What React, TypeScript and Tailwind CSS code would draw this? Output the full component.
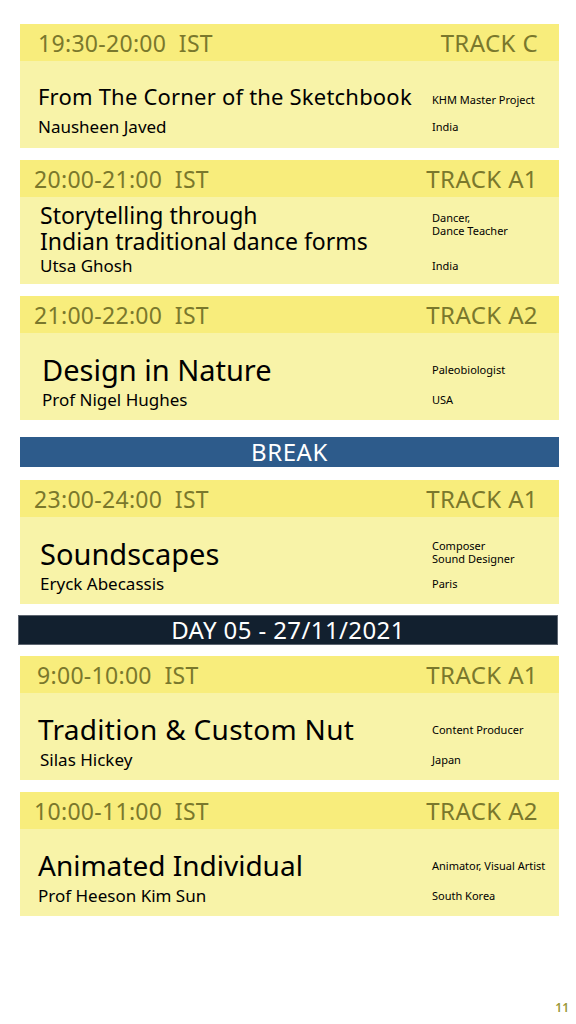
import React from "react";

type Card = {
  time: string;
  track: string;
  titleLines: string[];
  name: string;
  role: string[];
  loc: string;
  mt: string;
  hpl: string;
  titleCls: string;
  namePl: string;
  bodyCls: string;
  roleCls: string;
};

const head = "'Noto Sans', 'Open Sans', sans-serif";
const body = "'Noto Sans', 'Open Sans', sans-serif";

const Session = ({ c }: { c: Card }) => (
  <div className={`${c.mt} w-[539px] ml-[3px] flex flex-col`}>
    <div
      className={`h-[37px] bg-[#f8ed7c] flex items-center justify-between ${c.hpl} pr-[21px] text-[#7a782c] text-[23px] leading-none tracking-[0.3px]`}
      style={{ fontFamily: head }}
    >
      <span className="whitespace-pre pt-[1px]">{c.time}</span>
      <span className="text-[24px] tracking-[0.4px] pt-[1px]">{c.track}</span>
    </div>
    <div
      className={`h-[87px] bg-[#f8f3a8] grid grid-cols-[1fr_127px] ${c.bodyCls} text-black`}
      style={{ fontFamily: body }}
    >
      <div className={`flex flex-col justify-center ${c.titleCls}`}>
        <p className="whitespace-nowrap">
          {c.titleLines.map((l, i) => (
            <React.Fragment key={l}>
              {i > 0 && <br />}
              {l}
            </React.Fragment>
          ))}
        </p>
      </div>
      <div className={`flex flex-col justify-center text-[11px] leading-[13px] ${c.roleCls}`}>
        <p className="whitespace-nowrap">
          {c.role.map((r, i) => (
            <React.Fragment key={r}>
              {i > 0 && <br />}
              {r}
            </React.Fragment>
          ))}
        </p>
      </div>
      <div className={`flex items-center ${c.namePl} text-[17px] leading-none`}>{c.name}</div>
      <div className="flex items-center text-[11px] leading-none">{c.loc}</div>
    </div>
  </div>
);

const cards: Card[] = [
  {
    time: "19:30-20:00  IST",
    track: "TRACK C",
    titleLines: ["From The Corner of the Sketchbook"],
    name: "Nausheen Javed",
    role: ["KHM Master Project"],
    loc: "India",
    mt: "mt-0",
    hpl: "pl-[18px]",
    titleCls: "pl-[18px] text-[22px] leading-none tracking-[0.2px]",
    namePl: "pl-[18px]",
    bodyCls: "grid-rows-[30px_24px] pt-[20px] gap-y-[3px]",
    roleCls: "pt-[6px]",
  },
  {
    time: "20:00-21:00  IST",
    track: "TRACK A1",
    titleLines: ["Storytelling through", "Indian traditional dance forms"],
    name: "Utsa Ghosh",
    role: ["Dancer,", "Dance Teacher"],
    loc: "India",
    mt: "mt-[12px]",
    hpl: "pl-[14px]",
    titleCls: "pl-[20px] text-[23px] leading-[26px]",
    namePl: "pl-[20px]",
    bodyCls: "grid-rows-[52px_22px] pt-[5px] gap-y-0",
    roleCls: "pb-[8px]",
  },
  {
    time: "21:00-22:00  IST",
    track: "TRACK A2",
    titleLines: ["Design in Nature"],
    name: "Prof Nigel Hughes",
    role: ["Paleobiologist"],
    loc: "USA",
    mt: "mt-[12px]",
    hpl: "pl-[14px]",
    titleCls: "pl-[22px] text-[29px] leading-none",
    namePl: "pl-[22px]",
    bodyCls: "grid-rows-[32px_24px] pt-[20px] gap-y-[2px]",
    roleCls: "",
  },
];

const cards2: Card[] = [
  {
    time: "23:00-24:00  IST",
    track: "TRACK A1",
    titleLines: ["Soundscapes"],
    name: "Eryck Abecassis",
    role: ["Composer", "Sound Designer"],
    loc: "Paris",
    mt: "mt-[13px]",
    hpl: "pl-[14px]",
    titleCls: "pl-[20px] text-[29px] leading-none",
    namePl: "pl-[20px]",
    bodyCls: "grid-rows-[32px_24px] pt-[20px] gap-y-[2px]",
    roleCls: "pb-[2px]",
  },
];

const cards3: Card[] = [
  {
    time: "9:00-10:00  IST",
    track: "TRACK A1",
    titleLines: ["Tradition & Custom Nut"],
    name: "Silas Hickey",
    role: ["Content Producer"],
    loc: "Japan",
    mt: "mt-[11px]",
    hpl: "pl-[17px]",
    titleCls: "pl-[18px] text-[28px] leading-none tracking-[0.3px]",
    namePl: "pl-[20px]",
    bodyCls: "grid-rows-[32px_24px] pt-[20px] gap-y-[2px]",
    roleCls: "",
  },
  {
    time: "10:00-11:00  IST",
    track: "TRACK A2",
    titleLines: ["Animated Individual"],
    name: "Prof Heeson Kim Sun",
    role: ["Animator, Visual Artist"],
    loc: "South Korea",
    mt: "mt-[12px]",
    hpl: "pl-[14px]",
    titleCls: "pl-[18px] text-[28px] leading-none",
    namePl: "pl-[18px]",
    bodyCls: "grid-rows-[32px_24px] pt-[20px] gap-y-[2px]",
    roleCls: "",
  },
];

export default function App() {
  return (
    <div className="w-[576px] h-[1024px] bg-white flex flex-col pt-[24px] pl-[17px] overflow-hidden">
      {cards.map((c) => (
        <Session key={c.time} c={c} />
      ))}
      <div
        className="mt-[17px] ml-[3px] w-[539px] h-[30px] bg-[#2d5b8b] text-white flex items-center justify-center text-[24px] tracking-[0.6px] leading-none"
        style={{ fontFamily: head }}
      >
        BREAK
      </div>
      {cards2.map((c) => (
        <Session key={c.time} c={c} />
      ))}
      <div
        className="mt-[11px] ml-[1px] w-[540px] h-[30px] bg-[#12202f] border border-[#5d6570] text-white flex items-center justify-center text-[24px] tracking-[0.4px] leading-none"
        style={{ fontFamily: head }}
      >
        DAY 05 - 27/11/2021
      </div>
      {cards3.map((c) => (
        <Session key={c.time} c={c} />
      ))}
      <div className="mt-auto mb-[10px] pr-[7px] flex justify-end text-[12px] font-semibold text-[#9a9838] leading-none" style={{ fontFamily: head }}>
        11
      </div>
    </div>
  );
}
